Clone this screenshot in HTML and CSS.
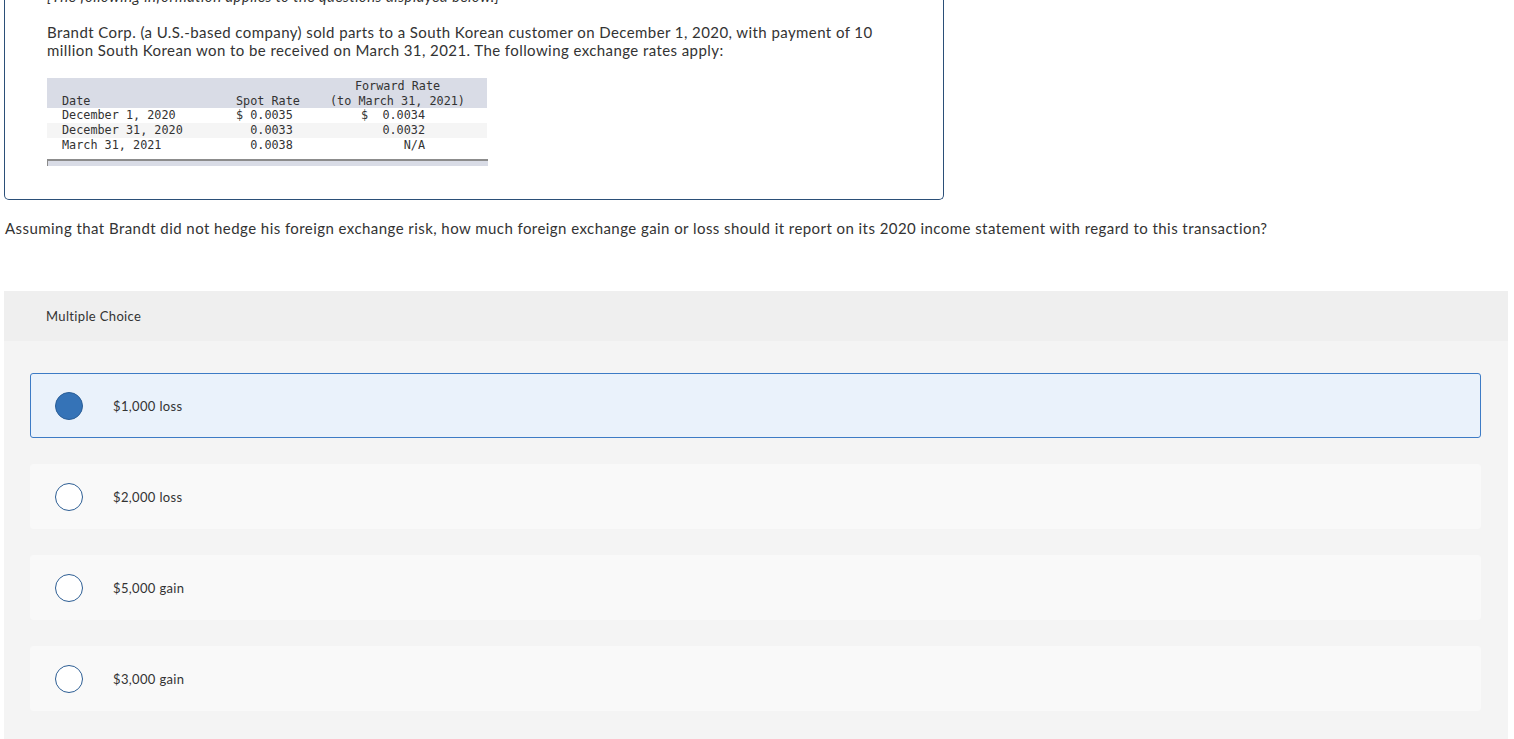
FILE: index.html
```html
<!DOCTYPE html>
<html lang="en">
<head>
  <meta charset="UTF-8">
  <title>Multiple Choice | Foreign Exchange</title>
  <meta name="viewport" content="width=device-width, initial-scale=1.0">
  <link rel="stylesheet" href="styles.css">
</head>

<body>

<div class="page">

  <div class="info-box">
    <p class="info-note">[The following information applies to the questions displayed below.]</p>
    <p class="info-text">Brandt Corp. (a U.S.-based company) sold parts to a South Korean customer on December 1, 2020, with payment of 10 million South Korean won to be received on March 31, 2021. The following exchange rates apply:</p>

    <table class="rates">
      <colgroup>
        <col class="col-date">
        <col class="col-spot">
        <col class="col-fwd">
      </colgroup>
      <thead>
        <tr class="head-top">
          <th></th>
          <th></th>
          <th class="fwd-head">Forward Rate</th>
        </tr>
        <tr class="head-bottom">
          <th class="date-cell">Date</th>
          <th class="spot-cell">Spot Rate</th>
          <th class="fwd-head">(to March 31, 2021)</th>
        </tr>
      </thead>
      <tbody>
        <tr>
          <td class="date-cell">December 1, 2020</td>
          <td class="spot-cell">$ 0.0035</td>
          <td class="fwd-cell">$  0.0034</td>
        </tr>
        <tr class="shaded">
          <td class="date-cell">December 31, 2020</td>
          <td class="spot-cell">  0.0033</td>
          <td class="fwd-cell">0.0032</td>
        </tr>
        <tr>
          <td class="date-cell">March 31, 2021</td>
          <td class="spot-cell">  0.0038</td>
          <td class="fwd-cell">N/A</td>
        </tr>
      </tbody>
    </table>
    <div class="table-foot"></div>
  </div>

  <p class="question">Assuming that Brandt did not hedge his foreign exchange risk, how much foreign exchange gain or loss should it report on its 2020 income statement with regard to this transaction?</p>

  <div class="choice-panel">
    <div class="choice-header">Multiple Choice</div>
    <div class="choice-list">
      <label class="choice selected">
        <span class="radio"></span>
        <span class="choice-label">$1,000 loss</span>
      </label>
      <label class="choice">
        <span class="radio"></span>
        <span class="choice-label">$2,000 loss</span>
      </label>
      <label class="choice">
        <span class="radio"></span>
        <span class="choice-label">$5,000 gain</span>
      </label>
      <label class="choice">
        <span class="radio"></span>
        <span class="choice-label">$3,000 gain</span>
      </label>
    </div>
  </div>

</div>

</body>
</html>
```

FILE: styles.css
```css
body {
  font-family: 'Lato', 'Helvetica Neue', Arial, sans-serif;
  margin: 0;
  background: #ffffff;
  color: #333333;
}
.page {
  margin-top: -23px;
}
.info-box {
  margin-left: 4px;
  width: 940px;
  box-sizing: border-box;
  border: 1px solid #2b4f78;
  border-top: none;
  border-radius: 0 0 5px 5px;
  padding: 10px 56px 33px 42px;
}
.info-box p {
  margin: 0;
  font-size: 15px;
  line-height: 18px;
  letter-spacing: 0.42px;
}
.info-note {
  font-style: italic;
}
.info-text {
  margin-top: 18px !important;
}
.rates {
  margin-top: 19px;
  width: 440px;
  table-layout: fixed;
  border-collapse: collapse;
  font-family: 'DejaVu Sans Mono', 'Liberation Mono', monospace;
  font-size: 11.8px;
  line-height: 15px;
  color: #333333;
}
.col-date {
  width: 189px;
}
.col-spot {
  width: 94px;
}
.col-fwd {
  width: 157px;
}
.rates th,
.rates td {
  padding: 0;
  font-weight: normal;
  white-space: pre;
  text-align: left;
}
.rates thead tr {
  background: #d9dce6;
}
.rates .head-top th {
  line-height: 16px;
}
.rates .head-bottom th {
  line-height: 14px;
}
.rates .date-cell {
  padding-left: 15px;
}
.rates .fwd-head {
  text-align: center;
  padding-right: 22px;
}
.rates .fwd-cell {
  text-align: right;
  padding-right: 62px;
}
.rates tr.shaded {
  background: #f5f5f5;
}
.table-foot {
  width: 440px;
  height: 5px;
  margin-top: 6px;
  background: #d9dce6;
  border-top: 2px solid #8c8c8c;
  border-left: 1px solid #8c8c8c;
  box-sizing: content-box;
}
.question {
  margin: 19px 0 0 5px;
  font-size: 15px;
  line-height: 18px;
  letter-spacing: 0.44px;
}
.choice-panel {
  margin: 54px 6px 0 4px;
  background: #f4f4f4;
  min-height: 460px;
}
.choice-header {
  background: #efefef;
  height: 50px;
  line-height: 50px;
  padding-left: 42px;
  font-size: 13px;
  letter-spacing: 0.35px;
}
.choice-list {
  display: flex;
  flex-direction: column;
  gap: 26px;
  padding: 32px 27px 32px 26px;
}
.choice {
  display: flex;
  align-items: center;
  height: 65px;
  box-sizing: border-box;
  padding-left: 24px;
  background: #f9f9f9;
  border: 1px solid #f9f9f9;
  border-radius: 3px;
  cursor: pointer;
}
.choice.selected {
  background: #eaf2fb;
  border-color: #3d7bc5;
}
.radio {
  width: 28px;
  height: 28px;
  box-sizing: border-box;
  border-radius: 50%;
  border: 1.5px solid #2d5e94;
  background: #ffffff;
  margin-right: 30px;
}
.choice.selected .radio {
  background: #3573b7;
  border-color: #2a5e97;
}
.choice-label {
  font-size: 13px;
  letter-spacing: 0.35px;
}
```
